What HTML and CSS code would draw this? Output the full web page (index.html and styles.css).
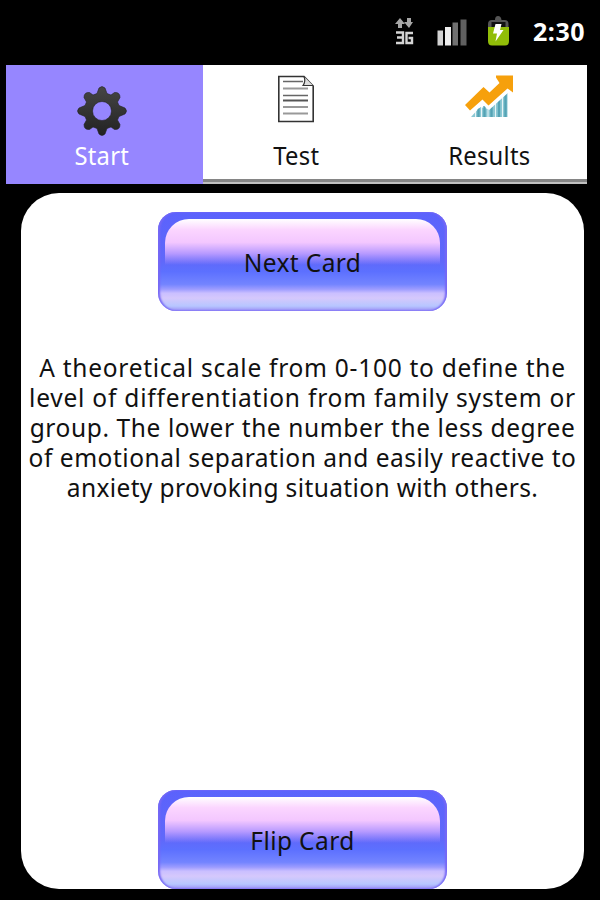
FILE: index.html
```html
<!DOCTYPE html>
<html lang="en">
<head>
<meta charset="utf-8">
<title>Flash Cards</title>
<link rel="stylesheet" href="styles.css">
</head>
<body>
<header class="status">
  <svg class="status-icons" width="120" height="40" viewBox="390 12 120 40">
    <g fill="#a6a6a6">
      <path d="M395 24l5-6 5 6h-3v4h-4v-4z"/>
      <path d="M407 18h4v4h2l-4 6-5-6h3z"/>
    </g>
    <g fill="none" stroke="#d4d4d4" stroke-width="2.4">
      <path d="M396 32.5h7v10.5h-7M397 37.5h6"/>
      <path d="M413 33h-6.500v10h5.500v-5h-3.500"/>
    </g>
    <path fill="#d2d2d2" d="M437.500 30.500h5.500v15h-5.500z"/>
    <path fill="#ededed" d="M445 27h6v18.500h-6z"/>
    <path fill="#707070" d="M452.500 22.500h5.500v23h-5.500z"/>
    <path fill="#606060" d="M460.500 19.500h6v26h-6z"/>
    <path fill="#555" d="M492 20h3q0-4 3-4t3.500 4h3q4 0 4 4v5h-20.500v-5q0-4 4-4z"/>
    <path fill="#111" d="M491.500 22h14v6h-14z"/>
    <path fill="#91bd08" d="M488 27h21v14q0 4.500-4 4.500h-13q-4 0-4-4.500z"/>
    <path fill="#fff" d="M495.500 24h6l-1.500 6h3.500l-8 11.500 1.500-8h-4z"/>
  </svg>
  <span class="clock">2:30</span>
</header>
<nav class="tabs">
  <div class="tab tab-active">
    <svg class="gear" width="50" height="50" viewBox="-25 -25 50 50">
      <defs><linearGradient id="metal" x2="0" y2="1"><stop offset="0" stop-color="#464646"/><stop offset="1" stop-color="#222"/></linearGradient></defs>
      <path fill="url(#metal)" fill-rule="evenodd" stroke="#222" stroke-width=".6" d="M-3-23Q0-26 3-23L5-17.500 9-16 12.500-18.500Q18-19 18-13.500L15.500-9 17-5.500 23-3Q26 0 23 3L17 5.500 15.500 9 18 13.500Q18 19 12.500 18.500L9 16 5 17.500 3 23Q0 26-3 23L-5 17.500-9 16-12.500 18.500Q-18 19-18 13.500L-15.500 9-17 5.500-23 3Q-26 0-23-3L-17-5.500-15.500-9-18-13.500Q-18-19-12.500-18.500L-9-16-5-17.500ZM0-9.500A9.500 9.500 0 1 0 0 9.500 9.500 9.500 0 1 0 0-9.500Z"/>
    </svg>
    <span class="label">Start</span>
  </div>
  <div class="tab">
    <svg class="icon doc" width="50" height="50" viewBox="270 74 50 50">
      <path fill="#fff" stroke="#333" stroke-width="1.6" d="M278.800 76.500H304l9.200 9.500v35.500h-34.400z"/>
      <path fill="#ddd" stroke="#333" stroke-width="1.200" d="M304 76.500q2 5-1 9h10"/>
      <path stroke="#666" stroke-width="1.500" d="M283 81.500h20M283 95.500h25"/>
      <path stroke="#999" stroke-width="2" d="M283 88.500h25M283 107h25M283 113.500h25"/>
      <path stroke="#555" stroke-width="2" d="M283 100.500h25"/>
    </svg>
    <span class="label">Test</span>
  </div>
  <div class="tab">
    <svg class="icon" width="50" height="50" viewBox="465 74 50 50">
      <path fill="#8cc8d4" d="M471 117l9-10 8.500 2 19-17.500V117z"/>
      <path stroke="#54a3b5" stroke-width="2.400" d="M478.500 108v9M484.500 106v11M491.500 107v10M499 99v18M505.500 93v24"/>
      <path stroke="#fff" stroke-width=".8" d="M475.500 108v9M481.500 104v13M488 104v13M495.500 102v15M502.500 95v22"/>
      <path stroke="#fff" stroke-width="3" fill="none" d="M471 112.500l12-9.500 6 5 21-19"/>
      <path fill="#f6a00c" d="M465 105l18.500-18 6 5.500 10-9.500-3.500-5.500v-2h17v17l-5.500-4-19 17-6-6-12.500 11z"/>
    </svg>
    <span class="label">Results</span>
  </div>
</nav>
<main class="card">
  <button class="glossy"><span class="sheen"><span class="caption">Next Card</span></span></button>
  <p class="definition">
    <span class="line line-1">A theoretical scale from 0-100 to define the</span>
    <span class="line line-2">level of differentiation from family system or</span>
    <span class="line line-3">group. The lower the number the less degree</span>
    <span class="line line-4">of emotional separation and easily reactive to</span>
    <span class="line line-5">anxiety provoking situation with others.</span>
  </p>
  <button class="glossy flip"><span class="sheen"><span class="caption">Flip Card</span></span></button>
</main>
</body>
</html>
```
FILE: styles.css
```css
* { box-sizing: border-box; }
body {
  margin: 0;
  height: 900px;
  overflow: hidden;
  background: #000;
  color: #111;
  font-family: "Noto Sans", "Open Sans", sans-serif;
  font-size: 25px;
  display: flex;
  flex-direction: column;
}
svg { display: block; }
.status {
  height: 65px;
  padding: 12px 15px 0 0;
  display: flex;
  justify-content: flex-end;
  gap: 23px;
}
.clock {
  color: #fff;
  font: bold 25px/38px "Noto Sans", sans-serif;
  letter-spacing: .5px;
}
.tabs {
  height: 119px;
  margin: 0 13px 0 6px;
  display: grid;
  grid-template-columns: 197px 192px 192px;
}
.tab {
  background: linear-gradient(#fff 114px, #858585 114px, #858585 117px, #c0c0c0 117px);
  display: flex;
  flex-direction: column;
  align-items: center;
  padding: 9px 6px 0 0;
}
.tab-active {
  background: #9686ff;
  color: #fff;
  padding: 21px 5px 0 0;
}
.label {
  line-height: 30px;
  margin-top: 16px;
  white-space: nowrap;
  letter-spacing: .3px;
  transform: scaleX(.95);
}
.gear + .label { margin-top: 4px; }
.doc { margin-right: 2px; }
.tab:last-child { padding-right: 3px; }
.card {
  width: 563px;
  height: 696px;
  margin: 9px 0 0 21px;
  padding-top: 19px;
  background: #fff;
  border-radius: 38px;
  display: flex;
  flex-direction: column;
  align-items: center;
}
.glossy {
  width: 289px;
  height: 99px;
  flex: none;
  padding: 5px 7px 0;
  border: 0;
  border-radius: 18px;
  color: #111;
  font: inherit;
  background: linear-gradient(#5b62fc 0, #6068fa 50%, #5c70ff 60%, #7384ff 73%, #9d9cff 78%, #cabfff 82%, #d5c8fc 87%, #b7c6ff 95%, #9c8ff5 100%);
  box-shadow: inset 2px 0 2px #7668f5, inset -2px 0 2px #7668f5;
}
.sheen {
  display: block;
  height: 90px;
  border-radius: 24px 24px 20px 20px;
  background: linear-gradient(#fff 0, #fbd5ff 12%, #f3c7ff 26%, #b99bff 38%, rgba(96, 104, 250, 0) 51%);
}
.caption {
  display: block;
  line-height: 86px;
  letter-spacing: .4px;
  transform: scaleX(.98);
}
.definition {
  margin: 41px 0 0;
  line-height: 30px;
  transform: scaleX(.98);
}
.line {
  display: block;
  text-align: center;
  white-space: nowrap;
}
.line-1 { letter-spacing: .74px; }
.line-2 { letter-spacing: .8px; }
.line-3 { letter-spacing: .61px; }
.line-4 { letter-spacing: .54px; }
.line-5 { letter-spacing: .39px; }
.flip { margin-top: auto; }
```
